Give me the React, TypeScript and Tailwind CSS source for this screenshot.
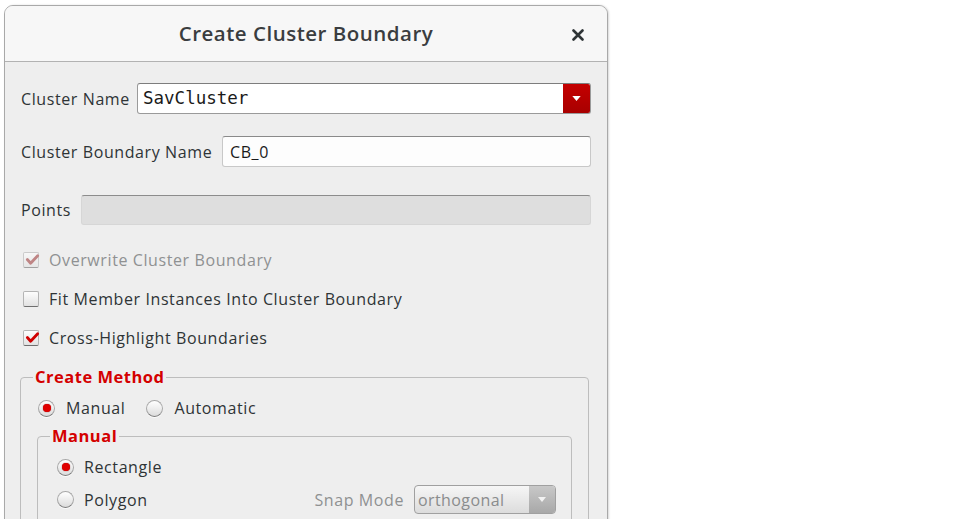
import React from "react";

const font = { fontFamily: '"Open Sans", "DejaVu Sans", sans-serif' };

function Checkbox({ checked, disabled }: { checked?: boolean; disabled?: boolean }) {
  return (
    <div
      className={`relative w-[16px] h-[16px] rounded-[2px] border border-[#b4b4b4] border-b-[#6f6f6f] bg-gradient-to-b from-[#fdfdfd] to-[#e2e2e2] ${disabled ? "opacity-60" : ""}`}
    >
      {checked && (
        <svg viewBox="0 0 16 16" className="absolute left-[1px] top-[-1px] w-[15px] h-[15px]">
          <path d="M2.5 8 L6 12 L13.5 4" fill="none" stroke={disabled ? "#a04040" : "#d00000"} strokeWidth="3" strokeLinecap="round" strokeLinejoin="round" />
        </svg>
      )}
    </div>
  );
}

function Radio({ checked }: { checked?: boolean }) {
  return (
    <div className="w-[17px] h-[17px] shrink-0 rounded-full border border-[#a8a8a8] border-b-[#7a7a7a] bg-gradient-to-b from-[#ffffff] to-[#dcdcdc] flex items-center justify-center shadow-[0_1px_0_rgba(255,255,255,0.8)]">
      {checked && <div className="w-[8px] h-[8px] rounded-full bg-[#e00000] shadow-[0_0_1px_#800000]" />}
    </div>
  );
}

export default function App() {
  return (
    <div className="w-[963px] h-[519px] overflow-hidden bg-white relative" style={font}>
      <div className="absolute left-[4px] top-[5px] w-[604px] h-[560px] rounded-t-[9px] border border-[#a9a9a9] shadow-[1px_0_2px_rgba(0,0,0,0.15)] bg-[#eeeeee] flex flex-col text-[#2e3436] overflow-hidden">
        {/* Header */}
        <div className="h-[56px] shrink-0 bg-[#f7f7f7] border-b border-[#b2b2b2] relative flex items-center justify-center">
          <span className="text-[20.5px] font-semibold text-[#3a3d3f] tracking-[0.5px]">Create Cluster Boundary</span>
          <svg viewBox="0 0 12 12" className="absolute right-[23px] top-[23px] w-[12px] h-[12px]">
            <path d="M1.5 1.5 L10.5 10.5 M10.5 1.5 L1.5 10.5" stroke="#2e3436" strokeWidth="2.6" strokeLinecap="round" />
          </svg>
        </div>

        {/* Body */}
        <div className="flex flex-col pl-[16px] pr-[16px] text-[16px] tracking-[0.6px]">
          {/* Cluster Name */}
          <div className="mt-[21px] h-[31px] flex items-center">
            <span className="w-[116px] shrink-0 whitespace-nowrap">Cluster Name</span>
            <div className="flex-1 h-full flex rounded-[3px] border border-[#9a9a9a] border-t-[#7d7d7d] bg-white overflow-hidden">
              <div className="flex-1 flex items-center pl-[5px] text-[17.5px] tracking-normal text-[#1a1a1a]" style={{ fontFamily: '"DejaVu Sans Mono", monospace' }}>
                SavCluster
              </div>
              <div className="w-[27px] h-full bg-gradient-to-b from-[#c40000] to-[#a80000] flex items-center justify-center">
                <svg viewBox="0 0 10 6" className="w-[9px] h-[5px]">
                  <path d="M0 0 L10 0 L5 6 Z" fill="#ffffff" />
                </svg>
              </div>
            </div>
          </div>

          {/* Cluster Boundary Name */}
          <div className="mt-[22px] h-[31px] flex items-center">
            <span className="w-[201px] shrink-0 whitespace-nowrap">Cluster Boundary Name</span>
            <div className="flex-1 h-full flex items-center pl-[7px] rounded-[3px] border border-[#c8c8c8] border-t-[#8a8a8a] bg-[#fdfdfd] text-[#1a1a1a]">
              CB_0
            </div>
          </div>

          {/* Points */}
          <div className="mt-[28px] h-[30px] flex items-center">
            <span className="w-[60px] shrink-0">Points</span>
            <div className="flex-1 h-full rounded-[3px] border border-[#d6d6d6] border-t-[#8c8c8c] bg-[#dedede]" />
          </div>

          {/* Checkboxes */}
          <div className="mt-[23px] h-[24px] flex items-center">
            <div className="ml-[2px]"><Checkbox checked disabled /></div>
            <span className="ml-[10px] text-[#8f9192]">Overwrite Cluster Boundary</span>
          </div>
          <div className="mt-[15px] h-[24px] flex items-center">
            <div className="ml-[2px]"><Checkbox /></div>
            <span className="ml-[10px]">Fit Member Instances Into Cluster Boundary</span>
          </div>
          <div className="mt-[15px] h-[24px] flex items-center">
            <div className="ml-[2px]"><Checkbox checked /></div>
            <span className="ml-[10px]">Cross-Highlight Boundaries</span>
          </div>

          {/* Create Method */}
          <fieldset className="mt-[16px] mr-[2px] ml-[-1px] border border-[#bdbdbd] rounded-[4px] pl-[16px] pr-[16px] pb-[10px]">
            <legend className="ml-[-4px] px-[2px] text-[#d40000] font-bold text-[16.5px] tracking-[0.5px] leading-[22px]">Create Method</legend>
            <div className="h-[24px] mt-[8px] flex items-center">
              <div className="ml-[1px]"><Radio checked /></div>
              <span className="ml-[11px]">Manual</span>
              <div className="ml-[21px]"><Radio /></div>
              <span className="ml-[11px]">Automatic</span>
            </div>

            <fieldset className="mt-[5px] border border-[#bdbdbd] rounded-[4px] pl-[19px] pr-[15px] pb-[10px]">
              <legend className="ml-[-7px] px-[2px] text-[#d40000] font-bold text-[16.5px] tracking-[0.5px] leading-[22px]">Manual</legend>
              <div className="h-[24px] mt-[8px] flex items-center">
                <Radio checked />
                <span className="ml-[10px]">Rectangle</span>
              </div>
              <div className="h-[29px] mt-[6px] flex items-center">
                <Radio />
                <span className="ml-[10px]">Polygon</span>
                <div className="flex-1" />
                <span className="text-[#8f9192] mr-[10px] whitespace-nowrap">Snap Mode</span>
                <div className="w-[142px] h-[29px] shrink-0 flex rounded-[4px] border border-[#a0a0a0] bg-gradient-to-b from-[#f6f6f6] to-[#dcdcdc] overflow-hidden">
                  <div className="flex-1 flex items-center pl-[3px] text-[#8a8c8d] text-[16px] tracking-[0.4px]">orthogonal</div>
                  <div className="w-[26px] h-full bg-gradient-to-b from-[#c8c8c8] to-[#a8a8a8] flex items-center justify-center">
                    <svg viewBox="0 0 10 6" className="w-[8px] h-[5px]">
                      <path d="M0 0 L10 0 L5 6 Z" fill="#f2f2f2" />
                    </svg>
                  </div>
                </div>
              </div>
            </fieldset>
          </fieldset>
        </div>
      </div>
    </div>
  );
}
